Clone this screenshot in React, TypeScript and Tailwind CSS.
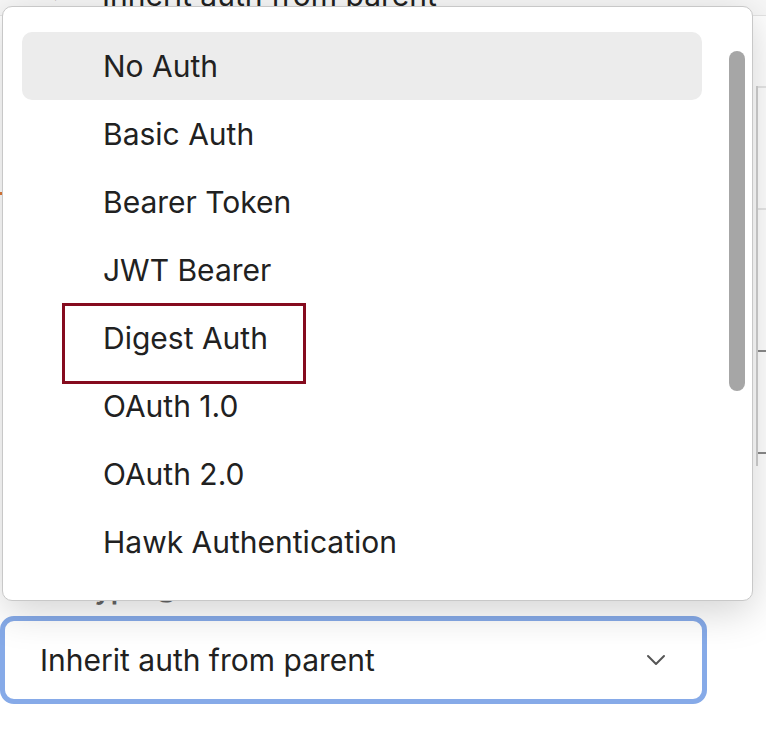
import { ChevronDown } from 'lucide-react'

const options = [
  'No Auth',
  'Basic Auth',
  'Bearer Token',
  'JWT Bearer',
  'Digest Auth',
  'OAuth 1.0',
  'OAuth 2.0',
  'Hawk Authentication',
]

export default function App() {
  return (
    <div className="relative w-[766px] h-[732px] overflow-hidden bg-white text-[#212121] font-['Inter',sans-serif]">
      {/* page behind the menu */}
      <div className="flex flex-col">
        <div className="flex items-center h-[40px] -mt-[24px] bg-[#f7f7f7] border-b border-[#e4e4e4]">
          <span className="ml-[52px] text-[14px] text-[#6b6b6b]">▾</span>
          <span className="ml-[43px] text-[30px]">Inherit auth from parent</span>
        </div>
        <div className="flex h-[552px]">
          <div className="w-[4px] mt-[176px] h-[3px] bg-[#e07b39]" />
          <div className="flex-1" />
          <div className="w-[10px] flex flex-col">
            <div className="h-[70px]" />
            <div className="flex-1 max-h-[380px] border-l-2 border-[#d0d0d0] flex flex-col">
              <div className="h-[2px] bg-[#e6e6e6]" />
              <div className="h-[120px]" />
              <div className="h-[2px] bg-[#e6e6e6]" />
              <div className="h-[140px]" />
              <div className="h-[2px] bg-[#8a8a8a]" />
              <div className="h-[100px]" />
              <div className="h-[2px] bg-[#8a8a8a]" />
            </div>
          </div>
        </div>
        <div className="h-[30px] pl-[6px] text-[28px] font-semibold text-[#666] leading-[30px] mt-[6px]">Auth Type ⓘ</div>
        <div className="mt-[12px] w-[707px] h-[88px] rounded-[14px] border-[5px] border-[#86aae8] bg-white flex items-center justify-between pl-[35px] pr-[30px]">
          <span className="text-[30px]">Inherit auth from parent</span>
          <ChevronDown size={32} strokeWidth={1.5} className="text-[#555]" />
        </div>
      </div>

      {/* dropdown menu */}
      <div className="absolute left-[2px] top-[6px] w-[751px] h-[595px] bg-white border border-[#c8c8c8] rounded-[10px] shadow-[0_10px_40px_rgba(0,0,0,0.18)] overflow-hidden flex">
        <div className="flex-1 pl-[19px] pr-[50px] pt-[25px] flex flex-col">
          {options.map((o, i) => (
            <div
              key={o}
              className={`shrink-0 h-[68px] flex items-center pl-[81px] text-[30px] rounded-[10px] ${i === 0 ? 'bg-[#ececec]' : ''}`}
            >
              {o}
            </div>
          ))}
        </div>
        <div className="absolute right-[7px] top-[44px] w-[16px] h-[340px] rounded-full bg-[#a6a6a6]" />
      </div>

      {/* highlight box */}
      <div className="absolute left-[62px] top-[303px] w-[244px] h-[81px] border-[3px] border-[#850b1e]" />
    </div>
  )
}
